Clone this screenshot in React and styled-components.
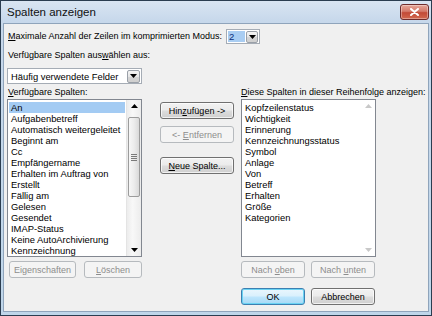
import React from 'react'
import styled, { createGlobalStyle, css } from 'styled-components'

const GlobalStyle = createGlobalStyle`
  html, body {
    margin: 0;
    padding: 0;
    background: #ffffff;
  }
  body {
    font-family: "Liberation Sans", Arial, sans-serif;
    font-size: 9px;
    color: #000;
  }
`

const Window = styled.div`
  width: 432px;
  height: 316px;
  box-sizing: border-box;
  border: 1px solid #2b3d50;
  background: linear-gradient(180deg, #d9e5f2 0%, #c7d8eb 20px, #bfd6ea 100%);
  display: flex;
  flex-direction: column;
  overflow: hidden;
`

const TitleBar = styled.div`
  height: 22px;
  flex: none;
  display: flex;
  align-items: flex-start;
  justify-content: space-between;
  padding-left: 6px;
  padding-right: 2px;
`

const Title = styled.span`
  font-size: 11.5px;
  line-height: 23px;
  color: #111;
`

const CloseButton = styled.div`
  margin-top: 3px;
  width: 27px;
  height: 14px;
  border: 1px solid #6e2c2c;
  border-radius: 3px;
  background: linear-gradient(180deg, #e6a79a 0%, #d47a6a 45%, #c24a37 55%, #d2684f 100%);
  display: flex;
  align-items: center;
  justify-content: center;
  box-shadow: inset 0 0 0 1px rgba(255, 255, 255, 0.35);
`

const Client = styled.div`
  flex: 1;
  margin: 0 2px 3px 2px;
  border: 1px solid #8fa4bb;
  background: #f0f0f0;
  padding: 5px 0 0 2px;
  display: flex;
  flex-direction: column;
`

const Row = styled.div`
  display: flex;
  align-items: center;
  gap: ${p => p.$gap || 0}px;
  margin-top: ${p => p.$top || 0}px;
  padding-left: ${p => p.$left || 0}px;
`

const Label = styled.span`
  display: block;
  line-height: 11px;
  white-space: nowrap;
  color: ${p => (p.$disabled ? '#8d8d8d' : '#000')};
`

const U = styled.span`
  text-decoration: underline;
  text-underline-offset: 1px;
`

const SpinBox = styled.div`
  display: flex;
  width: 34px;
  height: 15px;
  box-sizing: border-box;
  border: 1px solid #a5acb5;
  background: #fff;
`

const SpinField = styled.div`
  flex: 1;
  margin: 1px;
  background: #a9cdf2;
  color: #0c2f7a;
  font-size: 9.5px;
  line-height: 11px;
  padding-left: 1px;
`

const DropButton = styled.div`
  width: ${p => p.$size || 13}px;
  height: ${p => p.$size || 13}px;
  box-sizing: border-box;
  border: 1px solid #9aa0a8;
  border-radius: 2px;
  background: linear-gradient(180deg, #f4f4f4 0%, #e6e6e6 50%, #d5d5d5 51%, #cfcfcf 100%);
  display: flex;
  align-items: center;
  justify-content: center;
  align-self: center;
  margin-right: 1px;
`

const Combo = styled.div`
  width: 135px;
  height: 16px;
  box-sizing: border-box;
  border: 1px solid #a5acb5;
  background: #fff;
  display: flex;
  align-items: center;
  justify-content: space-between;
  padding-left: 3px;
  margin-left: 1px;
  font-size: 9.4px;
`

const Columns = styled.div`
  display: flex;
  margin-top: 3px;
  padding-left: 1px;
`

const Column = styled.div`
  display: flex;
  flex-direction: column;
  width: ${p => p.$width}px;
  margin-left: ${p => p.$left || 0}px;
  padding-top: ${p => p.$padTop || 0}px;
`

const ListBox = styled.div`
  margin-top: 1px;
  height: 158px;
  box-sizing: border-box;
  border: 1px solid #828790;
  background: #fff;
  display: flex;
`

const Items = styled.div`
  flex: 1;
  padding: 2px 1px 0 1px;
  font-size: 9.4px;
`

const Item = styled.div`
  height: 11px;
  line-height: 11px;
  padding-left: 2px;
  white-space: nowrap;
  ${p =>
    p.$selected &&
    css`
      background: #a3cbf3;
    `}
`

const ScrollBar = styled.div`
  width: 14px;
  display: flex;
  flex-direction: column;
  align-items: center;
  background: ${p => (p.$disabled ? '#fff' : 'linear-gradient(90deg, #ececec, #f8f8f8 40%, #ececec)')};
  border-left: ${p => (p.$disabled ? 'none' : '1px solid #e4e4e4')};
`

const ArrowCell = styled.div`
  height: 12px;
  width: 100%;
  display: flex;
  align-items: center;
  justify-content: center;
  flex: none;
`

const Track = styled.div`
  flex: 1;
  width: 100%;
  display: flex;
  flex-direction: column;
  align-items: center;
  padding-top: 5px;
`

const Thumb = styled.div`
  width: 12px;
  height: 80px;
  box-sizing: border-box;
  border: 1px solid #9c9c9c;
  border-radius: 2px;
  background: linear-gradient(90deg, #f7f7f7 0%, #ececec 50%, #d9d9d9 100%);
  display: flex;
  align-items: center;
  justify-content: center;
`

const Button = styled.div`
  width: ${p => p.$width}px;
  height: 17px;
  box-sizing: border-box;
  border-radius: 3px;
  display: flex;
  align-items: center;
  justify-content: center;
  white-space: nowrap;
  margin-top: ${p => p.$top || 0}px;
  margin-left: ${p => p.$left || 0}px;
  border: 1px solid #707070;
  background: linear-gradient(180deg, #f2f2f2 0%, #ebebeb 48%, #dddddd 52%, #cfcfcf 100%);
  box-shadow: inset 0 0 0 1px rgba(255, 255, 255, 0.7);
  color: #000;
  ${p =>
    p.$disabled &&
    css`
      border-color: #b6babe;
      background: #f4f4f4;
      color: #8d8d8d;
      box-shadow: none;
    `}
  ${p =>
    p.$default &&
    css`
      border-color: #3c7fb1;
      background: linear-gradient(180deg, #eaf6fd 0%, #d9f0fc 48%, #bee6fd 52%, #a7d9f5 100%);
      box-shadow: inset 0 0 0 1px #6ad3f3;
    `}
`

const ButtonRow = styled.div`
  display: flex;
  gap: ${p => p.$gap || 0}px;
  margin-top: ${p => p.$top || 0}px;
  padding-left: ${p => p.$left || 0}px;
`

const Down = ({ color = '#000' }) => (
  <svg width="7" height="4" viewBox="0 0 7 4">
    <polygon points="0,0 7,0 3.5,4" fill={color} />
  </svg>
)

const Up = ({ color = '#000' }) => (
  <svg width="7" height="4" viewBox="0 0 7 4">
    <polygon points="0,4 7,4 3.5,0" fill={color} />
  </svg>
)

const Grip = () => (
  <svg width="6" height="7" viewBox="0 0 6 7">
    {[0.5, 2.5, 4.5, 6.5].map(y => (
      <line key={y} x1="0" x2="6" y1={y} y2={y} stroke="#7a7a7a" strokeWidth="1" />
    ))}
  </svg>
)

const available = [
  'An',
  'Aufgabenbetreff',
  'Automatisch weitergeleitet',
  'Beginnt am',
  'Cc',
  'Empfängername',
  'Erhalten im Auftrag von',
  'Erstellt',
  'Fällig am',
  'Gelesen',
  'Gesendet',
  'IMAP-Status',
  'Keine AutoArchivierung',
  'Kennzeichnung'
]

const shown = [
  'Kopfzeilenstatus',
  'Wichtigkeit',
  'Erinnerung',
  'Kennzeichnungsstatus',
  'Symbol',
  'Anlage',
  'Von',
  'Betreff',
  'Erhalten',
  'Größe',
  'Kategorien'
]

export default () => (
  <>
    <GlobalStyle />
    <Window>
      <TitleBar>
        <Title>Spalten anzeigen</Title>
        <CloseButton>
          <svg width="9" height="8" viewBox="0 0 9 8">
            <path d="M1 1 L8 7 M8 1 L1 7" stroke="#fff" strokeWidth="2" strokeLinecap="round" />
          </svg>
        </CloseButton>
      </TitleBar>
      <Client>
        <Row $gap={4} $left={2}>
          <Label>
            <U>M</U>aximale Anzahl der Zeilen im komprimierten Modus:
          </Label>
          <SpinBox>
            <SpinField>2</SpinField>
            <DropButton $size={12}>
              <Down />
            </DropButton>
          </SpinBox>
        </Row>
        <Row $top={6} $left={2}>
          <Label>
            Verfügbare Spalten aus<U>w</U>ählen aus:
          </Label>
        </Row>
        <Row $top={7}>
          <Combo>
            <span>Häufig verwendete Felder</span>
            <DropButton>
              <Down />
            </DropButton>
          </Combo>
        </Row>
        <Columns>
          <Column $width={135}>
            <Label style={{ paddingLeft: 1 }}>
              <U>V</U>erfügbare Spalten:
            </Label>
            <ListBox>
              <Items>
                {available.map((a, i) => (
                  <Item key={a} $selected={i === 0}>
                    {a}
                  </Item>
                ))}
              </Items>
              <ScrollBar>
                <ArrowCell>
                  <Up />
                </ArrowCell>
                <Track>
                  <Thumb>
                    <Grip />
                  </Thumb>
                </Track>
                <ArrowCell>
                  <Down />
                </ArrowCell>
              </ScrollBar>
            </ListBox>
            <ButtonRow $gap={8} $left={2} $top={4}>
              <Button $width={72} $disabled>
                <span>
                  Ei<U>g</U>enschaften
                </span>
              </Button>
              <Button $width={62} $disabled>
                <span>
                  <U>L</U>öschen
                </span>
              </Button>
            </ButtonRow>
          </Column>
          <Column $width={74} $left={18} $padTop={15}>
            <Button $width={74}>
              <span>
                Hin<U>z</U>ufügen -&gt;
              </span>
            </Button>
            <Button $width={74} $top={7} $disabled>
              <span>
                &lt;- <U>E</U>ntfernen
              </span>
            </Button>
            <Button $width={74} $top={14}>
              <span>
                <U>N</U>eue Spalte...
              </span>
            </Button>
          </Column>
          <Column $width={135} $left={7}>
            <Label>
              <U>D</U>iese Spalten in dieser Reihenfolge anzeigen:
            </Label>
            <ListBox>
              <Items>
                {shown.map(s => (
                  <Item key={s}>{s}</Item>
                ))}
              </Items>
              <ScrollBar $disabled>
                <ArrowCell>
                  <Up color="#c8c8c8" />
                </ArrowCell>
                <Track />
                <ArrowCell>
                  <Down color="#c8c8c8" />
                </ArrowCell>
              </ScrollBar>
            </ListBox>
            <ButtonRow $gap={6} $top={4}>
              <Button $width={64} $disabled>
                <span>
                  Nach <U>o</U>ben
                </span>
              </Button>
              <Button $width={64} $disabled>
                <span>
                  Nach <U>u</U>nten
                </span>
              </Button>
            </ButtonRow>
            <ButtonRow $gap={6} $top={10}>
              <Button $width={64} $default>
                OK
              </Button>
              <Button $width={64}>Abbrechen</Button>
            </ButtonRow>
          </Column>
        </Columns>
      </Client>
    </Window>
  </>
)
